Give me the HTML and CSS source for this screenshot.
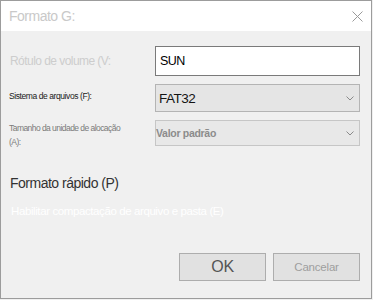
FILE: index.html
```html
<!DOCTYPE html>
<html lang="pt">
<head>
<meta charset="utf-8">
<link rel="stylesheet" href="styles.css">
</head>
<body>
<div class="dlg">
  <div class="titlebar">
    <span class="title">Formato G:</span>
    <svg class="close" width="11" height="11" viewBox="0 0 11 11"><path d="M0.5 0.5 L10.5 10.5 M10.5 0.5 L0.5 10.5" stroke="#9a9a9a" stroke-width="1" fill="none"/></svg>
  </div>
  <div class="content">
    <div class="form">
      <label class="lbl lbl-ghost">Rótulo de volume (V:</label>
      <div class="input">SUN</div>
      <label class="lbl lbl-dark">Sistema de arquivos (F):</label>
      <div class="select"><span>FAT32</span><svg class="chev" width="8" height="5" viewBox="0 0 8 5"><path d="M0.5 0.5 L4 4 L7.5 0.5" stroke="#8a8a8a" fill="none"/></svg></div>
      <label class="lbl lbl-gray">Tamanho da unidade de alocação<br>(A):</label>
      <div class="select select-off"><span>Valor padrão</span><svg class="chev" width="8" height="5" viewBox="0 0 8 5"><path d="M0.5 0.5 L4 4 L7.5 0.5" stroke="#8a8a8a" fill="none"/></svg></div>
    </div>
    <div class="quick">Formato rápido (P)</div>
    <div class="compress">Habilitar compactação de arquivo e pasta (E)</div>
    <div class="buttons">
      <button class="btn btn-ok">OK</button>
      <button class="btn btn-cancel">Cancelar</button>
    </div>
  </div>
</div>
</body>
</html>
```
FILE: styles.css
```css
html, body {
  margin: 0;
  padding: 0;
  background: #f0f0f0;
}
body {
  font-family: "Liberation Sans", Arial, sans-serif;
}
.dlg {
  width: 372px;
  height: 299px;
  box-sizing: border-box;
  border: 1px solid #9c9c9c;
  background: #f0f0f0;
  display: flex;
  flex-direction: column;
}
.titlebar {
  height: 30px;
  flex: none;
  background: #ffffff;
  display: flex;
  align-items: center;
  justify-content: space-between;
  padding: 0 8px 0 8px;
}
.title {
  font-size: 14px;
  letter-spacing: -0.5px;
  color: #c9c9c9;
  line-height: 18px;
}
.close {
  display: block;
  margin-top: 1px;
}
.content {
  flex: 1;
  padding: 15px 11px 0 8px;
  display: flex;
  flex-direction: column;
}
.form {
  display: grid;
  grid-template-columns: 146px 205px;
  grid-template-rows: 30px 28px 26px;
  row-gap: 8px;
  align-items: center;
}
.lbl {
  display: block;
}
.lbl-ghost {
  font-size: 12px;
  letter-spacing: -0.55px;
  color: #cdcdcd;
  padding-left: 1px;
  padding-bottom: 1px;
}
.lbl-dark {
  font-size: 8.5px;
  letter-spacing: -0.42px;
  color: #202020;
  padding-bottom: 4px;
}
.lbl-gray {
  font-size: 8.5px;
  letter-spacing: -0.55px;
  line-height: 14px;
  color: #7a7a7a;
  align-self: start;
  margin-top: 1px;
}
.input {
  height: 30px;
  box-sizing: border-box;
  background: #ffffff;
  border: 1px solid #7a7a7a;
  padding-left: 4px;
  font-size: 12.5px;
  letter-spacing: -0.6px;
  color: #000;
  display: flex;
  align-items: center;
  padding-bottom: 1px;
}
.select {
  box-sizing: border-box;
  height: 100%;
  background: #e5e5e5;
  border: 1px solid #b4b4b4;
  padding: 0 5px 0 3px;
  display: flex;
  align-items: center;
  justify-content: space-between;
  font-size: 13.5px;
  letter-spacing: -0.5px;
  color: #141414;
}
.select-off {
  background: #e8e8e8;
  border-color: #c6c6c6;
  padding-left: 0;
  font-size: 10.5px;
  letter-spacing: -0.3px;
  font-weight: bold;
  color: #8c8c8c;
}
.chev {
  display: block;
}
.quick {
  margin-top: 28px;
  font-size: 14px;
  letter-spacing: -0.5px;
  line-height: 18px;
  color: #333333;
  padding-left: 1px;
}
.compress {
  margin-top: 12px;
  font-size: 11.5px;
  letter-spacing: -0.4px;
  line-height: 15px;
  color: #ffffff;
  padding-left: 2px;
}
.buttons {
  margin-top: 34px;
  display: flex;
  justify-content: flex-end;
  gap: 7px;
}
.btn {
  width: 87px;
  height: 28px;
  box-sizing: border-box;
  background: #e1e1e1;
  border: 1px solid #adadad;
  border-radius: 0;
  font-family: inherit;
  padding: 0;
  margin: 0;
}
.btn-ok {
  font-size: 16px;
  letter-spacing: -0.3px;
  color: #555555;
}
.btn-cancel {
  font-size: 11.5px;
  letter-spacing: -0.2px;
  color: #9e9e9e;
}
```
